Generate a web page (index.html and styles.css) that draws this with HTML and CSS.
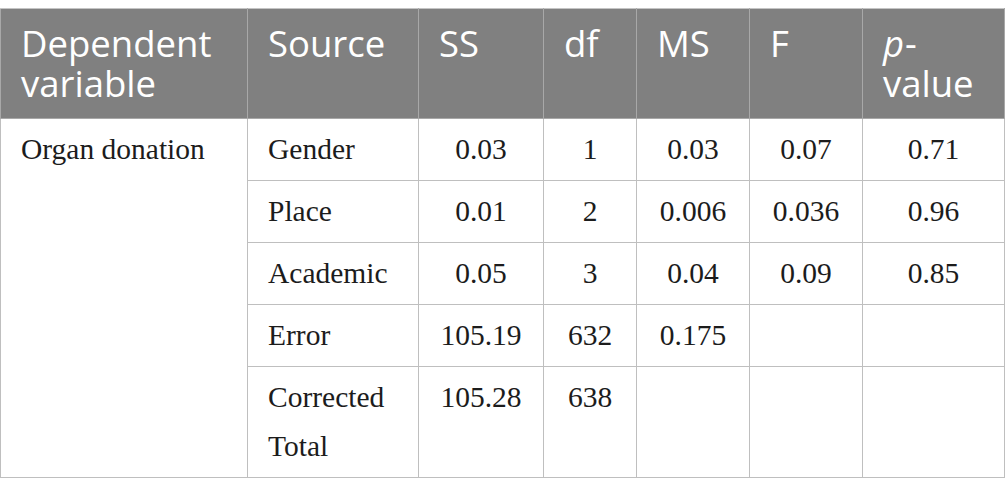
FILE: index.html
```html
<!DOCTYPE html>
<html lang="en">
<head>
<meta charset="utf-8">
<title>ANOVA table</title>
<link rel="stylesheet" href="styles.css">
</head>
<body>
<div class="wrap">
<table class="anova">
  <colgroup>
    <col class="c1"><col class="c2"><col class="c3"><col class="c4"><col class="c5"><col class="c6"><col class="c7">
  </colgroup>
  <thead>
    <tr>
      <th>Dependent variable</th>
      <th>Source</th>
      <th>SS</th>
      <th>df</th>
      <th>MS</th>
      <th>F</th>
      <th><i class="pv">p</i>-<br>value</th>
    </tr>
  </thead>
  <tbody>
    <tr>
      <td class="txt" rowspan="5">Organ donation</td>
      <td class="txt">Gender</td>
      <td class="num">0.03</td>
      <td class="num">1</td>
      <td class="num">0.03</td>
      <td class="num">0.07</td>
      <td class="num">0.71</td>
    </tr>
    <tr>
      <td class="txt">Place</td>
      <td class="num">0.01</td>
      <td class="num">2</td>
      <td class="num">0.006</td>
      <td class="num">0.036</td>
      <td class="num">0.96</td>
    </tr>
    <tr>
      <td class="txt">Academic</td>
      <td class="num">0.05</td>
      <td class="num">3</td>
      <td class="num">0.04</td>
      <td class="num">0.09</td>
      <td class="num">0.85</td>
    </tr>
    <tr>
      <td class="txt">Error</td>
      <td class="num">105.19</td>
      <td class="num">632</td>
      <td class="num">0.175</td>
      <td class="num"></td>
      <td class="num"></td>
    </tr>
    <tr>
      <td class="txt">Corrected Total</td>
      <td class="num">105.28</td>
      <td class="num">638</td>
      <td class="num"></td>
      <td class="num"></td>
      <td class="num"></td>
    </tr>
  </tbody>
</table>
</div>
</body>
</html>
```

FILE: styles.css
```css
html, body {
  margin: 0;
  padding: 0;
  background: #ffffff;
}

.wrap {
  padding-top: 8px;
}

.anova {
  border-collapse: collapse;
  table-layout: fixed;
  width: 1004px;
}

.c1 { width: 247px; }
.c2 { width: 171px; }
.c3 { width: 125px; }
.c4 { width: 93px; }
.c5 { width: 113px; }
.c6 { width: 113px; }
.c7 { width: 142px; }

.anova th {
  background: #808080;
  color: #ffffff;
  font-family: "Open Sans", "Noto Sans", sans-serif;
  font-weight: 400;
  font-size: 36.5px;
  line-height: 40px;
  text-align: left;
  vertical-align: top;
  padding: 14px 18px 15px 20px;
  border: 1px solid #a8a8a8;
  border-top-color: #c4c4c4;
}

.anova th .pv {
  padding-right: 1px;
}

.anova td {
  font-family: "Liberation Serif", "Times New Roman", serif;
  font-size: 29.5px;
  line-height: 49px;
  color: #1c1c1c;
  vertical-align: top;
  padding: 6px 20px;
  border: 1px solid #bfbfbf;
}

.anova td.num {
  text-align: center;
  padding-left: 4px;
  padding-right: 4px;
}
```
